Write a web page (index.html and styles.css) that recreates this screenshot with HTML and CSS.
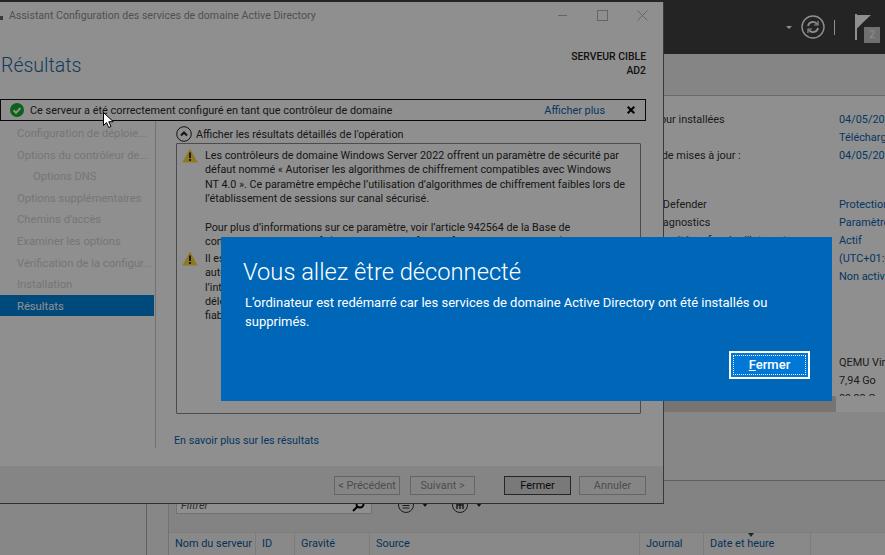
FILE: index.html
```html
<!DOCTYPE html>
<html lang="fr">
<head>
    <meta charset="UTF-8" />
    <title>Gestionnaire de serveur</title>
    <link rel="stylesheet" href="styles.css">
</head>
<body>
<div class="desktop">

    <!-- server manager, behind everything -->
    <div class="manager">
        <div class="mgr-top">
            <span class="mgr-caret"></span>
            <svg class="mgr-refresh" width="24" height="24" viewBox="0 0 24 24" fill="none" stroke="#fff">
                <circle cx="12" cy="12" r="11" stroke-width="1.4"/>
                <path d="M7 11a5 5 0 0 1 9-2M17 13a5 5 0 0 1-9 2" stroke-width="1.8"/>
                <path d="M17 6v4h-4M7 18v-4h4" stroke-width="1.2"/>
            </svg>
            <span class="mgr-sep"></span>
            <div class="mgr-flag">
                <svg width="16" height="26" viewBox="0 0 16 26">
                    <path d="M0 0h2v26H0z" fill="#fff"/>
                    <path d="M2 1h14l-7 6.500-7 7z" fill="#fff"/>
                </svg>
                <span class="flag-count">2</span>
            </div>
        </div>
        <div class="mgr-band"></div>
        <div class="mgr-main">
            <div class="mgr-side"></div>
            <div class="mgr-content">
                <div class="props">
                    <div class="props-columns">
                        <div class="props-labels">
                            <div class="prop">Dernières mises à jour installées</div>
                            <div class="prop"></div>
                            <div class="prop">Dernière recherche de mises à jour :</div>
                            <div class="prop"></div>
                            <div class="prop prop-half"></div>
                            <div class="prop">Antivirus Microsoft Defender</div>
                            <div class="prop">Commentaires et diagnostics</div>
                            <div class="prop">Configuration de sécurité renforcée d'Internet</div>
                        </div>
                        <div class="props-values">
                            <div class="prop link">04/05/2022</div>
                            <div class="prop link">Téléchargement</div>
                            <div class="prop link">04/05/2022</div>
                            <div class="prop"></div>
                            <div class="prop prop-half"></div>
                            <div class="prop link">Protection</div>
                            <div class="prop link">Paramètres</div>
                            <div class="prop link">Actif</div>
                            <div class="prop link">(UTC+01:00)</div>
                            <div class="prop link">Non activé</div>
                            <div class="prop-gap"></div>
                            <div class="prop">QEMU Virtual</div>
                            <div class="prop">7,94 Go</div>
                            <div class="prop">89,22 Go</div>
                        </div>
                    </div>
                    <div class="props-scroll"><span class="scroll-thumb"></span></div>
                </div>
                <div class="events">
                    <div class="events-tools">
                        <div class="filter">
                            <span>Filtrer</span>
                            <svg width="13" height="13" viewBox="0 0 13 13" fill="none" stroke="#000" stroke-width="2">
                                <circle cx="8" cy="5" r="3.500"/>
                                <path d="M5.500 7.500 1 12"/>
                            </svg>
                        </div>
                        <svg class="round-btn" width="16" height="16" viewBox="0 0 16 16" fill="none" stroke="#333">
                            <circle cx="8" cy="8" r="7.500"/>
                            <path d="M4.500 6h7M4.500 8.500h7M4.500 11h7"/>
                        </svg>
                        <span class="tool-caret"></span>
                        <svg class="round-btn" width="16" height="16" viewBox="0 0 16 16" fill="none" stroke="#333">
                            <circle cx="8" cy="8" r="7.500"/>
                            <path d="M5 12V5h6v7M8 5v7M5 8h6" stroke-width="1.500"/>
                        </svg>
                        <span class="tool-caret"></span>
                    </div>
                    <div class="events-head">
                        <span class="col col-server">Nom du serveur</span>
                        <span class="col col-id">ID</span>
                        <span class="col col-sev">Gravité</span>
                        <span class="col col-src">Source</span>
                        <span class="col col-log">Journal</span>
                        <span class="col col-date">Date et heure<i class="sort-caret"></i></span>
                    </div>
                </div>
            </div>
        </div>
    </div>

    <!-- wizard window -->
    <div class="wizard">
        <div class="wiz-title">
            <span class="wiz-icon"></span>
            <span class="wiz-caption">Assistant Configuration des services de domaine Active Directory</span>
            <div class="wiz-controls">
                <svg width="11" height="11" viewBox="0 0 11 11" stroke="#b4b4b4" fill="none"><path d="M1 5.500h9"/></svg>
                <svg width="11" height="11" viewBox="0 0 11 11" stroke="#b4b4b4" fill="none"><rect x=".5" y=".5" width="10" height="10"/></svg>
                <svg width="11" height="11" viewBox="0 0 11 11" stroke="#b4b4b4" fill="none"><path d="M.5.500l10 10M10.500.500l-10 10"/></svg>
            </div>
        </div>
        <div class="wiz-head">
            <h1>Résultats</h1>
            <div class="target">
                <div>SERVEUR CIBLE</div>
                <div>AD2</div>
            </div>
        </div>
        <div class="alert">
            <svg class="alert-icon" width="14" height="14" viewBox="0 0 14 14">
                <circle cx="7" cy="7" r="7" fill="#16b02c"/>
                <path d="M3.500 7.200 6 9.700l4.500-4.700" fill="none" stroke="#fff" stroke-width="2"/>
            </svg>
            <span class="alert-text">Ce serveur a été correctement configuré en tant que contrôleur de domaine</span>
            <a class="alert-more">Afficher plus</a>
            <svg class="alert-close" width="8" height="8" viewBox="0 0 8 8" stroke="#000" stroke-width="2"><path d="M.7.700l6.600 6.600M7.300.700.700 7.300"/></svg>
        </div>
        <div class="wiz-body">
            <ul class="steps">
                <li>Configuration de déploie...</li>
                <li>Options du contrôleur de...</li>
                <li class="sub">Options DNS</li>
                <li>Options supplémentaires</li>
                <li>Chemins d'accès</li>
                <li>Examiner les options</li>
                <li>Vérification de la configur...</li>
                <li>Installation</li>
                <li class="current">Résultats</li>
            </ul>
            <div class="results">
                <div class="results-toggle">
                    <svg width="16" height="16" viewBox="0 0 16 16" fill="none" stroke="#222">
                        <circle cx="8" cy="8" r="7.300"/>
                        <path d="M5 9.500 8 6.500l3 3" stroke-width="2"/>
                    </svg>
                    <span>Afficher les résultats détaillés de l'opération</span>
                </div>
                <div class="results-box">
                    <div class="msg">
                        <svg class="warn" width="16" height="15" viewBox="0 0 16 15">
                            <path d="M8 .5 15.700 14.500H.3z" fill="#ffd83a"/>
                            <path d="M7.100 4.500h1.800v5.500H7.100zM7.100 11h1.800v2H7.100z" fill="#222"/>
                        </svg>
                        <p>Les contrôleurs de domaine Windows Server 2022 offrent un paramètre de sécurité par<br>
                        défaut nommé « Autoriser les algorithmes de chiffrement compatibles avec Windows<br>
                        NT 4.0 ». Ce paramètre empêche l’utilisation d’algorithmes de chiffrement faibles lors de<br>
                        l’établissement de sessions sur canal sécurisé.<br>
                        <br>
                        Pour plus d’informations sur ce paramètre, voir l’article 942564 de la Base de<br>
                        connaissances Microsoft (http://go.microsoft.com/fwlink/?LinkId=104751).</p>
                    </div>
                    <div class="msg">
                        <svg class="warn" width="16" height="15" viewBox="0 0 16 15">
                            <path d="M8 .5 15.700 14.500H.3z" fill="#ffd83a"/>
                            <path d="M7.100 4.500h1.800v5.500H7.100zM7.100 11h1.800v2H7.100z" fill="#222"/>
                        </svg>
                        <p>Il est impossible de créer une délégation pour ce serveur DNS car la zone parente<br>
                        autoritaire est introuvable ou elle n’exécute pas le serveur DNS Windows. Si vous<br>
                        l’intégrez à une infrastructure DNS existante, vous devez créer manuellement une<br>
                        délégation avec ce serveur DNS dans la zone parente pour garantir une résolution<br>
                        fiable des noms.</p>
                    </div>
                </div>
                <a class="results-link">En savoir plus sur les résultats</a>
            </div>
        </div>
        <div class="wiz-foot">
            <button class="btn btn-prev">&lt; Précédent</button>
            <button class="btn btn-next">Suivant &gt;</button>
            <button class="btn btn-close">Fermer</button>
            <button class="btn btn-cancel">Annuler</button>
        </div>
    </div>

    <div class="dim"></div>

    <!-- logoff notice -->
    <div class="notice">
        <h2>Vous allez être déconnecté</h2>
        <p>L’ordinateur est redémarré car les services de domaine Active Directory ont été installés ou supprimés.</p>
        <div class="notice-foot">
            <button class="notice-btn"><span><u>F</u>ermer</span></button>
        </div>
    </div>

    <svg class="cursor" width="11" height="17" viewBox="0 0 11 17">
        <path d="M.5.500v13l3-3 2.200 5 2.300-1-2.200-4.800h4.500z" fill="#fff" stroke="#000"/>
    </svg>
</div>
</body>
</html>
```

FILE: styles.css
```css
* {
    box-sizing: border-box;
}
html, body {
    margin: 0;
    height: 100%;
    overflow: hidden;
}
body {
    font-family: Roboto, "Noto Sans", sans-serif;
    font-size: 10.900px;
    color: #2a2a2a;
}
.desktop {
    position: relative;
    width: 885px;
    height: 555px;
    overflow: hidden;
    background: #f0f0f0;
}

/* server manager */
.manager {
    display: flex;
    flex-direction: column;
    height: 100%;
}
.mgr-top {
    display: flex;
    align-items: center;
    justify-content: flex-end;
    height: 54px;
    flex: none;
    padding: 0 5px 0 0;
    background: #404040;
}
.mgr-caret {
    width: 0;
    height: 0;
    margin-right: 9px;
    border: 3px solid transparent;
    border-top: 3px solid #fff;
    border-bottom: 0;
}
.mgr-sep {
    width: 1px;
    height: 15px;
    margin: 0 20px 0 9px;
    background: #fff;
}
.mgr-flag {
    position: relative;
    width: 25px;
    height: 29px;
    margin-top: 3px;
}
.flag-count {
    position: absolute;
    right: 0;
    bottom: 0;
    width: 16px;
    height: 16px;
    background: #c8c8c8;
    color: #fff;
    font-size: 10px;
    line-height: 16px;
    text-align: center;
}
.mgr-band {
    height: 42px;
    flex: none;
    background: #eee;
    border-bottom: 1px solid #bbb;
}
.mgr-main {
    display: flex;
    flex: 1;
    min-height: 0;
}
.mgr-side {
    width: 147px;
    flex: none;
    border-right: 1px solid #aaa;
    margin-right: 21px;
}
.mgr-content {
    flex: 1;
    display: flex;
    flex-direction: column;
    min-width: 0;
    border-left: 1px solid #ccc;
}
.props {
    height: 385px;
    flex: none;
    border-bottom: 1px solid #aaa;
}
.props-columns {
    display: flex;
    height: 300px;
    padding-top: 15px;
    background: #fff;
    overflow: hidden;
}
.props-labels {
    width: 670px;
    padding-left: 399px;
    flex: none;
    white-space: nowrap;
}
.props-values {
    flex: 1;
    white-space: nowrap;
}
.prop {
    height: 18px;
    line-height: 18px;
    color: #333;
}
.prop-half {
    height: 13px;
}
.prop-gap {
    height: 68px;
}
.link {
    color: #0a63b0;
}
.props-scroll {
    height: 16px;
    background: #fff;
}
.scroll-thumb {
    display: block;
    width: 667px;
    height: 100%;
    background: #d4cfcb;
}
.events {
    flex: 1;
    background: #eaeaea;
    display: flex;
    flex-direction: column;
}
.events-tools {
    display: flex;
    align-items: center;
    height: 51px;
    flex: none;
    padding: 15px 0 18px 7px;
}
.filter {
    display: flex;
    align-items: center;
    justify-content: space-between;
    width: 196px;
    height: 18px;
    padding: 0 6px 0 4px;
    margin-right: 26px;
    border: 1px solid #ccc;
    background: #fff;
    font-style: italic;
    color: #555;
}
.round-btn {
    flex: none;
}
.tool-caret {
    width: 0;
    height: 0;
    margin: 0 24px 0 8px;
    border: 3px solid transparent;
    border-top: 4px solid #222;
    border-bottom: 0;
}
.events-head {
    display: flex;
    flex: 1;
    background: #f4f4f4;
    border-top: 1px solid #ddd;
    color: #0a5aa0;
}
.col {
    position: relative;
    padding-left: 6px;
    height: 100%;
    line-height: 21px;
    border-right: 1px solid #ddd;
    white-space: nowrap;
}
.col-server { width: 87px; }
.col-id { width: 39px; }
.col-sev { width: 75px; }
.col-src { width: 270px; }
.col-log { width: 64px; }
.col-date { width: 107px; }
.sort-caret {
    position: absolute;
    left: 44px;
    top: 0;
    width: 0;
    height: 0;
    border: 3px solid transparent;
    border-top: 4px solid #444;
    border-bottom: 0;
}

/* wizard */
.wizard {
    position: absolute;
    left: 0;
    top: 2px;
    width: 664px;
    height: 502px;
    display: flex;
    flex-direction: column;
    background: #fff;
    border-right: 1px solid #666;
    border-bottom: 1px solid #555;
}
.wiz-title {
    display: flex;
    align-items: center;
    height: 27px;
    flex: none;
    padding: 0 15px 0 0;
    color: #909090;
}
.wiz-icon {
    width: 3px;
    height: 4px;
    margin: 4px 6px 0 0;
    background: #666;
}
.wiz-caption {
    flex: 1;
    font-size: 10.600px;
}
.wiz-controls {
    display: flex;
    gap: 29px;
}
.wiz-head {
    display: flex;
    justify-content: space-between;
    height: 70px;
    flex: none;
    padding: 21px 17px 0 1px;
}
.wiz-head h1 {
    margin: 1px 0 0;
    font-size: 19.500px;
    font-weight: 300;
    line-height: 30px;
    color: #1c6ca6;
}
.target {
    text-align: right;
    font-weight: 500;
    font-size: 10.400px;
    line-height: 14px;
    color: #222;
}
.alert {
    display: flex;
    align-items: center;
    width: 646px;
    height: 22px;
    flex: none;
    padding: 0 10px 0 9px;
    border: 1.500px solid #111;
}
.alert-icon {
    margin-right: 6px;
}
.alert-text {
    flex: 1;
}
.alert-more {
    color: #0a63b0;
    margin-right: 22px;
}
.wiz-body {
    display: flex;
    flex: 1;
    min-height: 0;
}
.steps {
    width: 156px;
    height: 327px;
    flex: none;
    margin: 0;
    padding: 1px 0 0;
    list-style: none;
    border-right: 1px solid #ccc;
    font-size: 11.200px;
}
.steps li {
    height: 21.600px;
    line-height: 23px;
    padding-left: 17px;
    margin-right: 1px;
    color: #d2d2d2;
    white-space: nowrap;
}
.steps .sub {
    padding-left: 33px;
}
.steps .current {
    background: #0084dc;
    color: #fff;
}
.results {
    flex: 1;
    min-width: 0;
    padding: 4px 0 0 18px;
    font-size: 10.750px;
}
.results-toggle {
    display: flex;
    align-items: center;
    gap: 4px;
    height: 18px;
    padding-left: 2px;
}
.results-box {
    width: 465px;
    height: 271px;
    margin-left: 2px;
    padding: 5px 0 0 5px;
    border: 1px solid #888;
    border-radius: 1px;
}
.msg {
    display: flex;
    gap: 7px;
    margin-bottom: 2px;
}
.warn {
    flex: none;
    margin-top: -1px;
}
.msg p {
    margin: 0;
    line-height: 14.400px;
    white-space: nowrap;
}
.results-link {
    display: block;
    margin-top: 20px;
    color: #0a63b0;
}
.wiz-foot {
    display: flex;
    align-items: center;
    justify-content: flex-end;
    height: 37px;
    flex: none;
    padding: 1px 17px 0 0;
    background: #eeeeee;
}
.btn {
    height: 19px;
    padding: 0;
    border: 1px solid #b5b5b5;
    background: #eee;
    font: inherit;
    color: #8a8a8a;
}
.btn-prev { width: 66px; }
.btn-next { width: 65px; margin-left: 10px; }
.btn-close {
    width: 67px;
    margin-left: 29px;
    background: #d8d8d8;
    border-color: #444;
    color: #111;
}
.btn-cancel { width: 67px; margin-left: 8px; }

/* modal overlay */
.dim {
    position: absolute;
    inset: 0;
    background: rgba(0, 0, 0, 0.44);
}
.notice {
    position: absolute;
    left: 221px;
    top: 237px;
    width: 611px;
    height: 164px;
    padding: 20px 22px 0 24px;
    background: #0067b8;
    color: #fff;
}
.notice h2 {
    margin: 0 0 6px -2px;
    font-size: 23.700px;
    font-weight: 300;
    line-height: 30px;
}
.notice p {
    margin: 0;
    font-size: 13px;
    line-height: 19px;
}
.notice-foot {
    display: flex;
    justify-content: flex-end;
    margin: 20px 0 0;
}
.notice-btn {
    width: 81px;
    height: 28px;
    padding: 2px;
    border: 2px solid #fff;
    background: #0078d7;
    color: #fff;
    font: inherit;
    font-size: 13px;
    font-weight: 500;
}
.notice-btn span {
    display: block;
    height: 100%;
    line-height: 19px;
    outline: 1px dotted #fff;
    outline-offset: -1px;
}
.cursor {
    position: absolute;
    left: 103px;
    top: 112px;
}
```
